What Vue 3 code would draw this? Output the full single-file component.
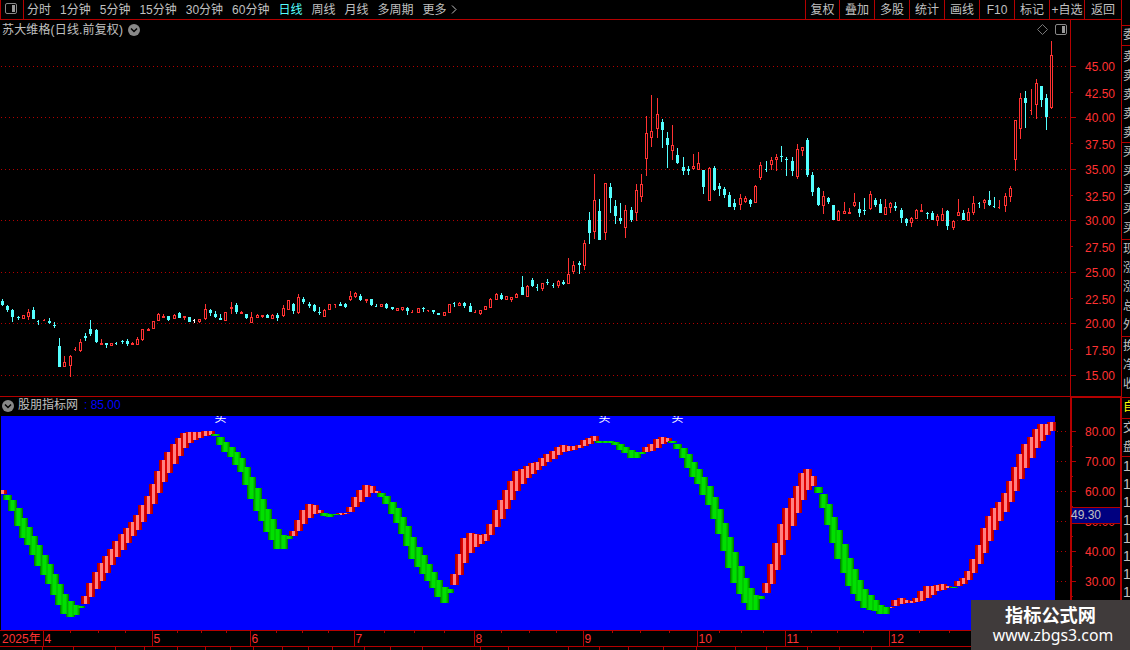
<script setup>
import { computed } from 'vue';

const periods = ['分时', '1分钟', '5分钟', '15分钟', '30分钟', '60分钟', '日线', '周线', '月线', '多周期', '更多'];
const tools = ['复权', '叠加', '多股', '统计', '画线', 'F10', '标记', '+自选', '返回'];

// kind + high, body top, body bottom, low (pane pixels); r = up, c = down, lower x/y/w = one-sided tick
const candleData = `
c299,301,305,306 c305,306,310,312 c309,310,317,322 c316,317,318,320 r315,315,319,319 r309,312,317,320
c307,310,319,319 y320,321,322,325 x319,320,321,321 c318,321,323,324 c322,325,326,328 c338,346,367,367
r356,362,367,367 r355,356,366,377 x347,349,350,351 r339,342,351,352 c333,336,338,341 c320,329,334,336
c329,330,342,343 r339,343,345,345 c343,343,345,348 r343,343,346,346 y342,343,344,345 c340,341,342,344
c339,341,344,346 r342,343,345,345 r337,339,345,345 r329,329,340,341 r328,329,331,331 r321,321,329,329
r313,314,321,321 r314,316,318,318 c316,316,320,321 r314,315,319,319 c312,313,318,318 r316,316,318,320
c317,317,322,322 w319,320,321,323 r319,319,322,323 r304,309,319,320 c309,310,313,316 c311,314,317,318
c314,318,320,320 r312,312,321,321 r302,307,309,314 c303,305,312,314 r311,312,314,314 c314,314,318,319
r312,317,323,323 r314,315,318,318 r315,315,317,318 c314,315,318,318 r314,315,319,319 c313,315,318,321
r305,308,316,317 r300,300,310,310 c303,304,311,314 r294,297,313,314 c297,299,302,304 c302,304,306,308
c304,305,311,312 c307,312,313,315 r309,310,317,317 r304,304,310,310 x304,304,305,308 c302,304,306,306
c303,304,307,308 r291,296,300,301 r292,293,297,298 c294,296,300,301 r299,299,301,303 c299,299,305,306
y304,306,307,307 r304,304,307,307 c303,304,308,309 c307,307,309,310 r308,308,311,311 r307,307,310,311
c307,308,311,315 x310,312,313,313 r308,308,313,313 c307,308,309,312 x310,310,311,312 c310,310,312,314
c313,313,315,315 r312,312,316,316 r304,304,313,313 y302,303,304,307 r302,303,306,306 c302,303,306,308
c303,306,312,312 x310,312,313,313 r310,310,314,315 r306,306,310,310 r298,299,308,308 r293,294,300,300
c293,295,299,300 r296,296,300,300 r297,297,300,302 r293,294,298,298 c276,287,295,295 r285,286,297,297
c278,280,286,287 y284,287,288,291 r283,283,289,291 c279,282,283,285 y283,285,286,288 r280,281,286,288
c280,282,284,285 r258,274,284,284 r261,265,272,274 c261,263,265,274 r240,243,266,270 c212,220,233,244
r174,200,232,239 c199,211,240,240 r183,183,233,240 c183,187,198,213 c200,206,216,224 c203,218,221,224
r205,210,228,238 c207,210,220,222 r184,190,213,221 r174,184,197,202 r116,133,159,176 r95,131,138,147
r98,114,129,138 c119,122,130,148 c132,138,145,168 r125,145,151,160 c148,155,163,164 c157,167,171,175
c166,169,171,175 r154,166,169,170 r152,163,170,170 c170,170,187,194 r167,168,201,201 c166,168,190,191
c183,186,189,196 c187,189,195,198 c192,195,207,207 c199,203,207,210 r194,198,205,210 r196,198,202,203
c199,200,204,207 r185,186,203,203 r162,165,178,180 y161,169,170,172 r157,160,165,170 r154,157,160,171
c146,156,157,162 c157,159,160,176 c157,161,171,176 r144,149,177,179 r147,147,151,156 c138,140,175,177
c172,175,192,196 c187,188,205,206 r191,196,206,214 c197,198,202,204 c205,205,220,220 r210,211,221,221
r202,211,214,214 r208,212,214,214 r193,202,206,207 c202,209,213,217 c198,210,211,215 r191,194,209,210
c198,200,205,207 c199,204,213,213 r199,207,215,215 r202,203,208,213 c202,206,208,211 c208,210,218,223
c218,219,223,226 r217,218,223,227 r209,210,219,219 r204,210,212,212 c212,213,214,219 c211,213,220,220
r214,216,221,226 r208,214,221,221 c210,211,226,230 r220,221,228,230 r199,212,216,216 c210,213,220,220
r208,212,221,221 r196,203,213,215 y202,203,204,208 r199,200,203,209 c191,200,205,206 y197,206,207,208
x200,207,208,209 r193,196,206,212 r186,188,197,202 r120,120,160,171 r93,98,129,139 c91,98,103,128
x89,110,111,115 r79,83,105,119 c86,86,100,107 c94,98,117,130 r41,55,108,109`;

// kind + top, bottom of every ribbon bar; r = rising, g = falling
const ribbonData = `
r490,494 g495,500 g500,511 g508,526 g518,538 g527,545 g536,555 g545,566 g555,575 g564,584 g574,595 g584,605
g594,614 g601,617 g605,615 g606,608 r596,604 r583,597 r572,589 r563,581 r556,573 r549,565 r541,557 r534,550
r528,543 r522,536 r515,530 r505,522 r496,514 r484,504 r471,493 r460,482 r452,473 r444,464 r438,456 r433,448
r432,443 r432,440 r432,438 r431,436 r431,435 g434,436 g437,445 g442,452 g447,457 g452,465 g458,472 g467,485
g477,499 g488,511 g499,521 g509,532 g519,540 g529,549 g535,549 g536,539 r531,536 r520,531 r510,524 r504,518
r505,514 r510,513 g513,516 g514,517 g514,515 r513,515 r513,514 r507,512 r497,507 r490,502 r485,497 r486,493
r491,493 g493,497 g496,504 g502,514 g508,523 g517,534 g526,546 g537,559 g547,567 g555,574 g564,581 g572,588
g580,597 g587,603 g589,593 r574,585 r554,575 r538,563 r533,553 r534,547 r535,544 r534,541 r524,535 r510,527
r500,519 r490,509 r481,500 r471,491 r469,484 r466,478 r463,474 r462,470 r458,466 r454,462 r451,459 r447,455
r445,452 r446,451 r446,450 r445,448 r440,446 r438,444 r436,441 g441,443 g441,443 g441,443 g442,445 g444,450
g447,453 g450,458 g452,458 g452,454 r447,452 r444,451 r439,448 r437,444 r438,442 g441,443 g444,449 g448,458
g454,468 g462,477 g469,484 g477,495 g486,505 g497,519 g509,534 g523,551 g537,568 g552,583 g566,594 g578,603
g588,610 g595,610 g596,599 r583,593 r564,584 r543,570 r524,555 r508,540 r498,526 r486,513 r473,500 r469,490
r476,486 g487,493 g494,508 g504,525 g517,543 g530,559 g544,573 g558,586 g569,594 g580,601 g589,608 g595,610
g600,611 g605,614 g607,614 r607,608 r600,606 r598,604 r600,603 r601,603 r598,602 r591,601 r586,598 r586,595
r585,591 r584,590 r586,588 g587,588 r581,586 r578,584 r571,580 r559,573 r545,564 r528,553 r516,541 r508,530
r502,521 r493,512 r481,502 r467,491 r454,479 r444,468 r437,458 r429,448 r424,441 r424,435 r422,431`;

const barX = (i) => Math.floor(2.595 + 5.1942 * i);
const parse = (text) =>
  text.trim().split(/\s+/).map((s, i) => ({ kind: s[0], x: barX(i), v: s.slice(1).split(',').map(Number) }));
const box = (x, y, w, h) => `M${x} ${y}h${w}v${h}h${-w}z`;

const candlePaths = computed(() => {
  const paths = { up: '', hollow: '', down: '', flat: '' };
  parse(candleData).forEach(({ kind, x, v: [high, top, bottom, low] }) => {
    const key = { r: 'up', x: 'up', c: 'down', y: 'down', w: 'flat' }[kind];
    const tick = 'xyw'.includes(kind);
    paths[key] += box(x, high, 1, low - high) + box(x - 1, top, tick ? 1 : 3, bottom - top);
    if (kind === 'r' && bottom - top > 2) paths.hollow += box(x, top + 1, 1, bottom - top - 2);
  });
  return paths;
});

// each layer is drawn for all bars before the next, narrower one
const bars = parse(ribbonData);
const ribbon = [
  ['r', 4, '#a80000'], ['r', 3, '#c80000'], ['r', 2, '#e00000'], ['r', 1, '#ff8080'],
  ['g', 4, '#008000'], ['g', 3, '#00a800'], ['g', 2, '#00c800'], ['g', 1, '#00e000'],
].map(([kind, r, fill]) => ({
  fill,
  d: bars.filter((b) => b.kind === kind).map(({ x, v: [top, bottom] }) => {
    const left = Math.max(1, x - r);
    return box(left, top, x + r + 1 - left, bottom - top);
  }).join(''),
}));

const prices = [
  [66, '45.00'], [92, '42.50'], [117, '40.00'], [143, '37.50'], [169, '35.00'], [195, '32.50'], [220, '30.00'],
  [246, '27.50'], [272, '25.00'], [298, '22.50'], [323, '20.00'], [349, '17.50'], [375, '15.00'],
];
const levels = [80, 70, 60, 50, 40, 30].map((n, i) => [431 + i * 30, n + '.00']);
const signals = [220, 604, 677];

const months = [
  [43, '4'], [152, '5'], [250, '6'], [354, '7'], [474, '8'], [583, '9'], [697, '10'], [785, '11'], [889, '12'],
];
const weeks = [
  70, 98, 125, 177, 201, 226, 276, 302, 328, 384, 414, 444, 501, 529, 556, 612, 640, 669, 719, 741, 763, 811, 837,
  863, 919, 949,
];
const footerTicks = [
  42, 73, 115, 144, 177, 205, 230, 253, 282, 308, 332, 364, 390, 422, 480, 508, 568, 599, 628, 663, 696, 735, 766,
  807, 839, 871,
];

const quoteGroups = [
  { h: 20, rows: '委' },
  { h: 97, rows: '卖卖卖卖卖', kind: 'ask' },
  { h: 97, rows: '买买买买买' },
  { h: 97, rows: '现涨涨总外' },
  { h: 61, rows: '换净收' },
  { h: 21, rows: '自', kind: 'hot' },
  { h: 38, rows: '交盘' },
  { h: 194, rows: '1111111111', kind: 'trades' },
];
</script>

<template>
  <div class="terminal">
    <div class="main">
      <header class="toolbar">
        <div class="layout-btn">
          <svg width="12" height="11" viewBox="0 0 12 11">
            <rect x="0.5" y="0.5" width="11" height="10" rx="1.5" fill="none" stroke="#888" />
            <rect x="7" y="2" width="3" height="7" fill="#999" />
          </svg>
        </div>
        <nav class="periods">
          <span v-for="p in periods" :key="p" :class="{ active: p === '日线' }">{{ p }}</span>
          <svg width="6" height="9" viewBox="0 0 6 9"><path d="M1 .5l4 4-4 4" fill="none" stroke="#c0c0c0" /></svg>
        </nav>
        <nav class="tools">
          <span v-for="t in tools" :key="t">{{ t }}</span>
        </nav>
      </header>

      <section class="pane">
        <div class="pane-title">
          <span class="name">苏大维格(日线.前复权)</span>
          <svg width="12" height="12" viewBox="0 0 12 12">
            <circle cx="6" cy="6" r="6" fill="#888" />
            <path d="M3 4.5l3 3 3-3" fill="none" stroke="#000" stroke-width="1.5" />
          </svg>
        </div>
        <svg width="1121" height="376" viewBox="0 20 1121 376">
          <g class="crisp">
            <template v-for="([y], i) in prices" :key="y">
              <path v-if="i % 2 === 0" :d="`M1 ${y + 0.5}H1067`" class="grid" />
              <rect x="1071" :y="y" :width="i % 2 ? 2 : 5" height="1" class="rule" />
            </template>
            <rect x="1070" y="20" width="1" height="376" class="rule" />
            <path :d="candlePaths.up" fill="#ff3232" />
            <path :d="candlePaths.hollow" fill="#000" />
            <path :d="candlePaths.down" fill="#54ffff" />
            <path :d="candlePaths.flat" fill="#fff" />
          </g>
          <text v-for="([y, label], i) in prices" :key="label" x="1085" :y="y + 5 + (i % 2)" class="scale">
            {{ label }}
          </text>
          <path d="M1042.5 24.5l5 5-5 5-5-5z" fill="none" stroke="#777" />
          <rect x="1055.5" y="24.5" width="11" height="10" rx="1.5" fill="none" stroke="#888" />
          <rect x="1062" y="26" width="3" height="7" fill="#999" />
        </svg>
      </section>

      <section class="pane lower">
        <div class="pane-title">
          <svg width="12" height="12" viewBox="0 0 12 12">
            <circle cx="6" cy="6" r="6" fill="#888" />
            <path d="M3 4.5l3 3 3-3" fill="none" stroke="#000" stroke-width="1.5" />
          </svg>
          <span>股朋指标网</span>
          <span class="value">: 85.00</span>
        </div>
        <svg width="1121" height="234" viewBox="0 396 1121 234">
          <g class="crisp">
            <rect x="1" y="416" width="1054" height="214" fill="#00f" />
            <path v-for="layer in ribbon" :key="layer.fill" :d="layer.d" :fill="layer.fill" />
            <template v-for="[y] in levels" :key="y">
              <path :d="`M1057 ${y + 0.5}H1067`" class="grid" />
              <rect x="1072" :y="y" width="4" height="1" class="rule" />
              <rect x="1072" :y="y + 15" width="1" height="1" class="rule" />
            </template>
            <rect x="0" y="396" width="1121" height="1" class="rule" />
            <rect x="1071" y="397" width="50" height="240" fill="none" stroke="#b40000" stroke-width="2" />
          </g>
          <text v-for="[y, label] in levels" :key="label" x="1085" :y="y + 5" class="scale">{{ label }}</text>
          <g class="crisp">
            <rect x="1072" y="507" width="48" height="17" class="rule" />
            <rect x="1072" y="508" width="48" height="15" fill="#000080" />
          </g>
          <text x="1071" y="519" class="scale cursor">49.30</text>
          <svg x="0" y="416" width="1055" height="20">
            <text v-for="x in signals" :key="x" :x="x - 5.5" y="5.5" class="signal">买</text>
          </svg>
        </svg>
      </section>

      <svg width="1121" height="20" viewBox="0 630 1121 20">
        <g class="crisp">
          <rect x="0" y="630" width="1121" height="1" class="rule" />
          <rect x="0" y="646" width="1121" height="1" class="rule" />
          <rect v-for="[x] in months" :key="x" :x="x" y="631" width="1" height="15" class="rule" />
          <rect v-for="x in weeks" :key="x" :x="x" y="631" width="1" height="2" class="rule" />
          <rect v-for="x in footerTicks" :key="x" :x="x" y="647" width="1" height="3" class="rule" />
        </g>
        <text x="2" y="643" class="scale">2025年</text>
        <text v-for="[x, label] in months" :key="label" :x="x + 1.5" y="643" class="scale">{{ label }}</text>
      </svg>
    </div>

    <aside class="quotes">
      <div
        v-for="(g, i) in quoteGroups"
        :key="i"
        class="quote-group"
        :class="g.kind"
        :style="{ height: g.h + 'px' }"
      >
        <span v-for="(c, j) in g.rows" :key="j">{{ c }}</span>
      </div>
    </aside>

    <div class="watermark">
      <strong>指标公式网</strong>
      <span>www.zbgs3.com</span>
    </div>
  </div>
</template>

<style>
body {
  margin: 0;
  background: #000;
  overflow: hidden;
}
</style>

<style scoped>
.terminal {
  position: relative;
  display: flex;
  width: 1130px;
  height: 650px;
  overflow: hidden;
  background: #000;
  color: #c0c0c0;
  font-family: "Liberation Sans", "Noto Sans CJK SC", sans-serif;
  font-size: 12px;
}

.main {
  display: flex;
  flex-direction: column;
  width: 1121px;
  flex: none;
}

svg {
  display: block;
  flex: none;
}

.toolbar {
  display: flex;
  box-sizing: border-box;
  height: 20px;
  border-bottom: 1px solid #b40000;
  line-height: 18px;
  white-space: nowrap;
}

.layout-btn {
  box-sizing: border-box;
  width: 24px;
  padding: 3px 0 0 4px;
  border: solid #b40000;
  border-width: 0 1px;
}

.periods {
  display: flex;
  align-items: center;
  gap: 9px;
  margin-left: 3px;
}

.periods svg {
  margin-left: -5px;
}

.active {
  color: #54ffff;
}

.tools {
  display: flex;
  margin-left: auto;
  line-height: 20px;
}

.tools span {
  box-sizing: border-box;
  width: 35px;
  height: 19px;
  border-left: 1px solid #b40000;
  text-align: center;
}

.tools span:first-child {
  width: 34px;
}

.tools span:last-child {
  width: 37px;
}

.pane {
  position: relative;
  height: 376px;
}

.lower {
  height: 234px;
}

.pane-title {
  position: absolute;
  top: 1px;
  left: 2px;
  display: flex;
  align-items: center;
  gap: 5px;
  line-height: 18px;
}

.name {
  letter-spacing: 0.15px;
}

.lower .pane-title {
  gap: 4px;
  line-height: 17px;
}

.value {
  margin-left: 2px;
  color: #00f;
}

.crisp {
  shape-rendering: crispEdges;
}

.grid {
  stroke: #b40000;
  stroke-dasharray: 1 3;
}

.rule {
  fill: #b40000;
}

.scale {
  fill: #ff3232;
  font-size: 12px;
}

.cursor {
  fill: #c0c0c0;
}

.signal {
  fill: #fff;
  font-size: 12px;
}

.quotes {
  box-sizing: border-box;
  width: 9px;
  padding-top: 25px;
  border-left: 1px solid #b40000;
  overflow: hidden;
}

.quote-group {
  display: flex;
  flex-direction: column;
  box-sizing: border-box;
  padding-left: 1px;
  border-top: 1px solid #b40000;
  line-height: 19px;
}

.ask {
  padding-top: 2px;
}

.hot {
  color: #ff0;
}

.trades {
  font-size: 14px;
  line-height: 18px;
}

.watermark {
  position: absolute;
  right: 0;
  bottom: 0;
  display: flex;
  flex-direction: column;
  align-items: center;
  box-sizing: border-box;
  width: 159px;
  height: 50px;
  padding-top: 4px;
  background: #403b3b;
  color: #fff;
  font-family: "Noto Sans", "Noto Sans CJK SC", sans-serif;
  font-size: 15.8px;
  line-height: 19px;
}

.watermark span {
  padding-left: 5px;
}

.watermark strong {
  font-size: 18.2px;
  line-height: 22px;
}
</style>
